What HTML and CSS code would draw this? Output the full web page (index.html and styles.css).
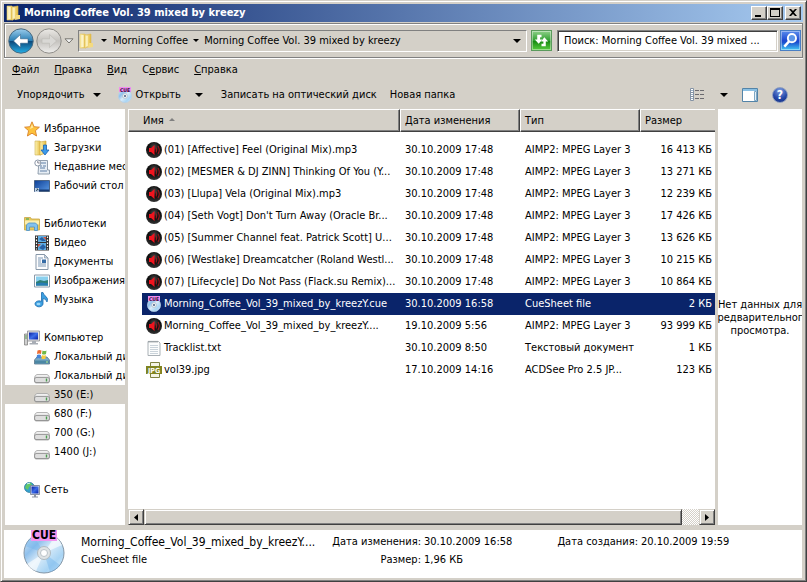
FILE: index.html
```html
<!DOCTYPE html>
<html lang="ru">
<head>
<meta charset="utf-8">
<title>Morning Coffee Vol. 39 mixed by kreezy</title>
<link rel="stylesheet" href="styles.css">
</head>
<body>
<svg class="sprite" aria-hidden="true">
  <defs>
    <linearGradient id="gFolder" x1="0" x2="1"><stop offset="0" stop-color="#fdf3b4"/><stop offset="1" stop-color="#e3b93c"/></linearGradient>
    <linearGradient id="gBlue" x1="0" x2="0" y1="0" y2="1"><stop offset="0" stop-color="#9ccdec"/><stop offset=".48" stop-color="#2b7fb4"/><stop offset=".5" stop-color="#0b4678"/><stop offset="1" stop-color="#25b0e8"/></linearGradient>
    <linearGradient id="gGrey" x1="0" x2="0" y1="0" y2="1"><stop offset="0" stop-color="#eceae6"/><stop offset=".5" stop-color="#c4c2be"/><stop offset="1" stop-color="#efeeec"/></linearGradient>
    <linearGradient id="gScreen" x1="0" x2="1" y1="0" y2="1"><stop offset="0" stop-color="#0a1fa0"/><stop offset=".5" stop-color="#3c6de8"/><stop offset="1" stop-color="#0820a8"/></linearGradient>
    <linearGradient id="gDesk" x1="0" x2="1" y1="0" y2="1"><stop offset="0" stop-color="#0d3f96"/><stop offset="1" stop-color="#5b9ae4"/></linearGradient>
    <linearGradient id="gDrive" x1="0" x2="0" y1="0" y2="1"><stop offset="0" stop-color="#fafafa"/><stop offset="1" stop-color="#a8a8a8"/></linearGradient>
    <linearGradient id="gDisc" x1="0" x2="1" y1="0" y2="1"><stop offset="0" stop-color="#e4f1fb"/><stop offset=".3" stop-color="#8fc0ec"/><stop offset=".5" stop-color="#d9ebf9"/><stop offset=".75" stop-color="#a8d4f4"/><stop offset="1" stop-color="#e9f5fd"/></linearGradient>
    <radialGradient id="gAudio" cx=".5" cy=".3" r=".7"><stop offset="0" stop-color="#4a4a4a"/><stop offset=".5" stop-color="#0c0c0c"/><stop offset="1" stop-color="#333"/></radialGradient>
  </defs>
  <symbol id="folder" viewBox="0 0 16 16"><path d="M1 1h5l1 2v12H1z" fill="url(#gFolder)" stroke="#e3c668" stroke-width=".6"/><path d="M6 2l6-1v12l-6 2z" fill="url(#gFolder)" stroke="#dcb954" stroke-width=".6"/><path d="M10 10h4v4l-5 1z" fill="#f4da80"/><path d="M3 2v12M4 2v12M8 3v10" stroke="#fffbe0"/></symbol>
  <symbol id="star" viewBox="0 0 16 16"><path d="M8 .8l2.1 4.9 5.3.5-4 3.5 1.2 5.3L8 12.2l-4.600 2.800 1.200-5.300-4-3.500 5.300-.5z" fill="#fdc23c" stroke="#d9822a" stroke-width=".9"/><path d="M8 3l1.300 3.500L6 8z" fill="#ffe9a0"/></symbol>
  <symbol id="downloads" viewBox="0 0 16 16"><path d="M1 1h5l1 2v12H1z" fill="url(#gFolder)" stroke="#cfae4d" stroke-width=".6"/><path d="M6 2l6-1v12l-6 2z" fill="url(#gFolder)" stroke="#cfa63a" stroke-width=".6"/><path d="M9.500 5h3v5H15l-4 5-4-5h2.500z" fill="#3d9bea" stroke="#1b62b4" stroke-width=".8"/></symbol>
  <symbol id="recent" viewBox="0 0 16 16"><path d="M5 1.500h8.500V11h2v4H4z" fill="#e7eef5" stroke="#8795a5" stroke-width=".9"/><path d="M7 4h5M6 7h2m1 0h3M6 9h5M6 12h7" stroke="#5f7fa5"/><circle cx="3.800" cy="4" r="3" fill="#fff" stroke="#8c98a8"/><path d="M3.800 2v2h2" fill="none" stroke="#667" stroke-width=".8"/></symbol>
  <symbol id="desktop" viewBox="0 0 16 16"><path d="M.5 2.500h15v11H.5z" fill="url(#gDesk)" stroke="#4c6484"/><path d="M1 11.500h14v1.500H1z" fill="#173a72"/><path d="M1 10h4v4H1z" fill="#c4d4ea"/><path d="M2 13l2-2m-1.500 0H4v1.500" stroke="#245" stroke-width=".8" fill="none"/></symbol>
  <symbol id="libraries" viewBox="0 0 16 16"><path d="M.5 1.500h6l1 1.500h8v11H.5z" fill="#e8c95c" stroke="#c8a543" stroke-width=".8"/><path d="M1 4.500h14v4H1z" fill="#fbeeb0"/><path d="M2 3h3" stroke="#4cab5a" stroke-width="1.200"/><path d="M2.500 14.500V9l2-2h7l2 2v5.500h-3V11h-5v3.500z" fill="#83c1ec" stroke="#4b92c6" stroke-width=".8"/></symbol>
  <symbol id="video" viewBox="0 0 16 16"><path d="M1 .5h14v15H1z" fill="#333"/><path d="M4 1h8v6H4zM4 8h8v7H4z" fill="#5faee4"/><path d="M5 4l3-2 4 4H8zM5 13l4-4 3 3-3 3z" fill="#2760a4"/><path d="M9 2h3v3zM4 9h3l-3 3z" fill="#cf5540"/><path d="M2.500 1.500v13M13.500 1.500v13" stroke="#fff" stroke-width="1.200" stroke-dasharray="1.500 1.500"/></symbol>
  <symbol id="docs" viewBox="0 0 16 16"><path d="M2 .5h8.500L14 4v11.500H2z" fill="#fdfdfe" stroke="#8797a8"/><path d="M10.500.5V4H14z" fill="#cbd8e4" stroke="#8797a8" stroke-width=".7"/><path d="M4 4h5M4 6h3M4 8h3M4 10h8M4 12h8" stroke="#7d98b4"/><path d="M8 5.500h4V9H8z" fill="#376ca6"/></symbol>
  <symbol id="images" viewBox="0 0 16 16"><path d="M.5 2h15v12H.5z" fill="#fff" stroke="#8a9aaa"/><path d="M2 3.500h12v9H2z" fill="#8ad0ee"/><path d="M2 9l4-2 4 1 4-1v5.500H2z" fill="#2f7f76"/><path d="M2 10.500l6-1 6 1v2H2z" fill="#267cb4"/></symbol>
  <symbol id="music" viewBox="0 0 16 16"><path d="M7.500.5h1.500q.5 2.500 3 4 2.500 2 1 5.500-1-3.500-4-3.500v5.500a4 3 0 1 1-1.500-2.500z" fill="#3c9fe0" stroke="#1e6dae" stroke-width=".8"/><ellipse cx="4.500" cy="12" rx="2" ry="1.300" fill="#9bd7f8"/></symbol>
  <symbol id="computer" viewBox="0 0 16 16"><path d="M.5 4h3v11h-3z" fill="#d0d0d0" stroke="#777" stroke-width=".7"/><path d="M1 6h2M1 8h2" stroke="#56a04e"/><path d="M3.500 1h12v10h-12z" fill="#e4e4e4" stroke="#8c8c90" stroke-width=".8"/><path d="M5 2.500h9v7H5z" fill="url(#gScreen)"/><path d="M8 11h4v2H8zM5.500 13h8.500v1.500H5.500z" fill="#a8adb5"/></symbol>
  <symbol id="drivewin" viewBox="0 0 16 16"><path d="M3 8h10l2.500 3v4H.5v-4z" fill="#7aaac4" stroke="#587488" stroke-width=".8"/><path d="M1 11.500h14v3H1z" fill="#4c87a4"/><path d="M12 12.500h2v1h-2z" fill="#b9f38a"/><path d="M3.500 1.500q2-1 4 0L7 5q-2-1-4 0z" fill="#ee6b30"/><path d="M8.500 1.500q2 1 4 0L12 5q-2 1-4 0z" fill="#72b845"/><path d="M3 6q2-1 4 0l-.5 3.500q-2-1-4 0z" fill="#4585d8"/><path d="M8 6q2 1 4 0l-.5 3.500q-2 1-4 0z" fill="#f8cb3c"/></symbol>
  <symbol id="drive" viewBox="0 0 16 16"><path d="M3 6.500h10q2 .5 2.500 3v4l-1 1.500h-13l-1-1.500v-4q.5-2.500 2.500-3z" fill="url(#gDrive)" stroke="#a2a2a2" stroke-width=".8"/><path d="M2 9.500h12q1.500 0 1.500 2.500t-1.500 2.500H2Q.5 14.500.5 12T2 9.500z" fill="#dedede" stroke="#828282" stroke-width=".7"/><path d="M12.500 10.500v3" stroke="#4c9c50" stroke-width="1.400"/></symbol>
  <symbol id="network" viewBox="0 0 16 16"><circle cx="5.500" cy="5.500" r="5" fill="#34a1ce" stroke="#1c6e94" stroke-width=".7"/><path d="M2 3q2-3 5-2l1 2-3 2-1 3-3-2z" fill="#62c767"/><path d="M3 1.800l3-.6" stroke="#c9f3f1"/><path d="M6.500 3.500h9v9h-9z" fill="#d9dde5" stroke="#747c90" stroke-width=".8"/><path d="M7.500 4.500h7v7h-7z" fill="url(#gScreen)"/><path d="M10 12.500h2v2h2v1H8v-1h2z" fill="#8d94a4"/></symbol>
  <symbol id="audio" viewBox="0 0 16 16"><circle cx="8" cy="8" r="8" fill="url(#gAudio)"/><path d="M3 6h2l3.500-3v10L5 10H3z" fill="#f0141e"/><path d="M10 5.500q1.500 2.500 0 5M12 4q2.500 4 0 8" fill="none" stroke="#a0161c" stroke-width="1.100"/></symbol>
  <symbol id="cue" viewBox="0 0 16 16"><circle cx="8" cy="9" r="6.600" fill="url(#gDisc)" stroke="#b6cfe4" stroke-width=".7"/><circle cx="8" cy="9" r="2.400" fill="#f5f7f8" stroke="#a8b8c4" stroke-width=".7"/><circle cx="8" cy="9" r="1" fill="#445c84"/><path d="M2 0h12v5H2z" fill="#f08cf0"/><text class="tiny" x="8" y="4.500" text-anchor="middle">CUE</text></symbol>
  <symbol id="text" viewBox="0 0 16 16"><path d="M2 1.500h10.500L14 3v12.500H2z" fill="#fcfdfd" stroke="#a0a8ae" stroke-width=".9"/><path d="M4 5.500h8M4 7.500h8M4 9.500h8M4 11.500h8M4 13.500h8" stroke="#bcc8d0" stroke-width=".8"/><path d="M3 .8v2M5 .8v2M7 .8v2M9 .8v2M11 .8v2" stroke="#8a9296" stroke-width=".8"/></symbol>
  <symbol id="jpg" viewBox="0 0 16 16"><path d="M4.500.5h9v15h-9z" fill="#f4f4e6" stroke="#7e8240"/><path d="M0 4h16v8H0z" fill="#7f8420"/><text class="ext" x="8" y="10.500" text-anchor="middle">JPG</text></symbol>
  <symbol id="bigcue" viewBox="0 0 42 44"><circle cx="21" cy="23" r="20" fill="url(#gDisc)" stroke="#8496a6"/><path d="M21 23L2 16q3-7 9-10zM21 23l16 12q-4 6-10 7z" fill="#6eb2ec" opacity=".4"/><path d="M21 23L4 34q4 6 9 7zM21 23L32 6q5 4 7 9z" fill="#fff" opacity=".6"/><circle cx="21" cy="23" r="6.500" fill="#dfe3e5" stroke="#b0bac0"/><circle cx="21" cy="23" r="3.500" fill="#fff" stroke="#b9c2c8"/></symbol>
</svg>

<div class="window">
  <header class="titlebar">
    <svg class="icon"><use href="#folder"/></svg>
    <h1>Morning Coffee Vol. 39 mixed by kreezy</h1>
    <div class="captions">
      <button class="cap" aria-label="Свернуть"><svg viewBox="0 0 12 10"><path d="M2 7h6v2H2z"/></svg></button>
      <button class="cap" aria-label="Развернуть"><svg viewBox="0 0 12 10"><path d="M1 0h10v9H1zM2 2v6h8V2z" fill-rule="evenodd"/></svg></button>
      <button class="cap close" aria-label="Закрыть"><svg viewBox="0 0 12 10"><path d="M2 1h2l2 2 2-2h2L7 4.500 10 8H8L6 6 4 8H2l3-3.500z"/></svg></button>
    </div>
  </header>

  <div class="navbar">
    <div class="travel">
      <button aria-label="Назад"><svg viewBox="0 0 26 26"><circle cx="13" cy="13" r="12.200" fill="url(#gBlue)" stroke="#49697f"/><path d="M5.500 13l7-6.500v4.300H20v4.400h-7.500v4.300z" fill="#fff" stroke="#1d4f78" stroke-width=".5"/></svg></button>
      <button aria-label="Вперёд"><svg viewBox="0 0 26 26"><circle cx="13" cy="13" r="12.200" fill="url(#gGrey)" stroke="#8e8c88"/><path d="M20.500 13l-7-6.500v4.300H6v4.400h7.500v4.300z" fill="#d9d8d5" stroke="#bbb8b3" stroke-width=".6"/></svg></button>
      <button class="recent-btn" aria-label="Последние страницы"><svg viewBox="0 0 10 6"><path d="M1 .8h8L5 5z" fill="#f2f2f2" stroke="#77756f"/></svg></button>
    </div>
    <nav class="address" aria-label="Адрес">
      <svg class="icon"><use href="#folder"/></svg>
      <button class="crumb-arrow" aria-label="Показать папки"><i class="small-arrow"></i></button>
      <a href="#">Morning Coffee</a>
      <button class="crumb-arrow" aria-label="Показать папки"><i class="small-arrow"></i></button>
      <a href="#">Morning Coffee Vol. 39 mixed by kreezy</a>
      <button class="history" aria-label="Предыдущие расположения"><i class="arrow"></i></button>
    </nav>
    <button class="square green" aria-label="Обновить"><svg viewBox="0 0 20 20"><path d="M10 4H5.500v5H3l4 4.500L11 9H8.500V6.500H10z" fill="#fff"/><path d="M10 16h4.500v-5H17l-4-4.500L9.500 11H12v2.500h-2z" fill="#fff"/></svg></button>
    <input class="search" type="text" aria-label="Поиск" placeholder="Поиск: Morning Coffee Vol. 39 mixed ...">
    <button class="square blue" aria-label="Найти"><svg viewBox="0 0 20 20"><circle cx="11.500" cy="7.500" r="4.300" fill="#5d96e8" stroke="#fff" stroke-width="2"/><path d="M8.500 11l-5 5.500" stroke="#fff" stroke-width="2.600"/></svg></button>
  </div>

  <nav class="menubar" aria-label="Меню">
    <button><u>Ф</u>айл</button><button><u>П</u>равка</button><button><u>В</u>ид</button><button>С<u>е</u>рвис</button><button><u>С</u>правка</button>
  </nav>

  <div class="toolbar">
    <button class="organize">Упорядочить <i class="arrow"></i></button>
    <button class="open"><svg class="icon"><use href="#cue"/></svg>Открыть</button>
    <button class="open-more" aria-label="Открыть с помощью"><i class="arrow"></i></button>
    <button class="burn">Записать на оптический диск</button>
    <button>Новая папка</button>
    <div class="tools">
      <button aria-label="Вид"><svg class="icon" viewBox="0 0 16 16"><path d="M.5 1.500h3v12h-3zM.5 5.500h3M.5 9.500h3" fill="#fff" stroke="#8593a4"/><path d="M1.500 3.500h1M1.500 7.500h1M1.500 11.500h1" stroke="#35608c"/><path d="M5 3.500h4m1 0h4M5 7.500h4m1 0h4M5 11.500h4m1 0h4" stroke="#6b6b70"/></svg></button>
      <button aria-label="Изменить вид"><i class="arrow"></i></button>
      <button aria-label="Область просмотра"><svg class="icon" viewBox="0 0 16 16"><path d="M.5 1.500h15v13H.5z" fill="#fff" stroke="#5384a8"/><path d="M1 2h14v2H1z" fill="#8ac0e4"/><path d="M12.500 4.500h2v9h-2z" fill="#e5eff7" stroke="#7fa8c4"/></svg></button>
      <button class="help" aria-label="Справка">?</button>
    </div>
  </div>

  <main class="body">
    <nav class="tree" aria-label="Область переходов">
      <ul>
        <li class="root"><a href="#"><svg class="icon"><use href="#star"/></svg>Избранное</a></li>
        <li><a href="#"><svg class="icon"><use href="#downloads"/></svg>Загрузки</a></li>
        <li><a href="#"><svg class="icon"><use href="#recent"/></svg>Недавние места</a></li>
        <li><a href="#"><svg class="icon"><use href="#desktop"/></svg>Рабочий стол</a></li>
      </ul>
      <ul>
        <li class="root"><a href="#"><svg class="icon"><use href="#libraries"/></svg>Библиотеки</a></li>
        <li><a href="#"><svg class="icon"><use href="#video"/></svg>Видео</a></li>
        <li><a href="#"><svg class="icon"><use href="#docs"/></svg>Документы</a></li>
        <li><a href="#"><svg class="icon"><use href="#images"/></svg>Изображения</a></li>
        <li><a href="#"><svg class="icon"><use href="#music"/></svg>Музыка</a></li>
      </ul>
      <ul>
        <li class="root"><a href="#"><svg class="icon"><use href="#computer"/></svg>Компьютер</a></li>
        <li><a href="#"><svg class="icon"><use href="#drivewin"/></svg>Локальный диск</a></li>
        <li><a href="#"><svg class="icon"><use href="#drive"/></svg>Локальный диск</a></li>
        <li class="active"><a href="#"><svg class="icon"><use href="#drive"/></svg>350 (E:)</a></li>
        <li><a href="#"><svg class="icon"><use href="#drive"/></svg>680 (F:)</a></li>
        <li><a href="#"><svg class="icon"><use href="#drive"/></svg>700 (G:)</a></li>
        <li><a href="#"><svg class="icon"><use href="#drive"/></svg>1400 (J:)</a></li>
      </ul>
      <ul>
        <li class="root"><a href="#"><svg class="icon"><use href="#network"/></svg>Сеть</a></li>
      </ul>
    </nav>

    <section class="files">
      <table>
        <colgroup><col><col class="c-date"><col class="c-type"><col class="c-size"></colgroup>
        <thead><tr><th>Имя <i class="sort"></i></th><th>Дата изменения</th><th>Тип</th><th>Размер</th></tr></thead>
        <tbody>
          <tr><td><svg class="icon"><use href="#audio"/></svg>(01) [Affective] Feel (Original Mix).mp3</td><td>30.10.2009 17:48</td><td>AIMP2: MPEG Layer 3</td><td>16 413 КБ</td></tr>
          <tr><td><svg class="icon"><use href="#audio"/></svg>(02) [MESMER &amp; DJ ZINN] Thinking Of You (Y...</td><td>30.10.2009 17:48</td><td>AIMP2: MPEG Layer 3</td><td>13 271 КБ</td></tr>
          <tr><td><svg class="icon"><use href="#audio"/></svg>(03) [Llupa] Vela (Original Mix).mp3</td><td>30.10.2009 17:48</td><td>AIMP2: MPEG Layer 3</td><td>12 239 КБ</td></tr>
          <tr><td><svg class="icon"><use href="#audio"/></svg>(04) [Seth Vogt] Don't Turn Away (Oracle Br...</td><td>30.10.2009 17:48</td><td>AIMP2: MPEG Layer 3</td><td>17 426 КБ</td></tr>
          <tr><td><svg class="icon"><use href="#audio"/></svg>(05) [Summer Channel feat. Patrick Scott] U...</td><td>30.10.2009 17:48</td><td>AIMP2: MPEG Layer 3</td><td>13 626 КБ</td></tr>
          <tr><td><svg class="icon"><use href="#audio"/></svg>(06) [Westlake] Dreamcatcher (Roland Westl...</td><td>30.10.2009 17:48</td><td>AIMP2: MPEG Layer 3</td><td>10 215 КБ</td></tr>
          <tr><td><svg class="icon"><use href="#audio"/></svg>(07) [Lifecycle] Do Not Pass (Flack.su Remix)...</td><td>30.10.2009 17:48</td><td>AIMP2: MPEG Layer 3</td><td>10 864 КБ</td></tr>
          <tr class="selected"><td><svg class="icon"><use href="#cue"/></svg>Morning_Coffee_Vol_39_mixed_by_kreezY.cue</td><td>30.10.2009 16:58</td><td>CueSheet file</td><td>2 КБ</td></tr>
          <tr><td><svg class="icon"><use href="#audio"/></svg>Morning_Coffee_Vol_39_mixed_by_kreezY....</td><td>19.10.2009 5:56</td><td>AIMP2: MPEG Layer 3</td><td>93 999 КБ</td></tr>
          <tr><td><svg class="icon"><use href="#text"/></svg>Tracklist.txt</td><td>30.10.2009 8:50</td><td>Текстовый документ</td><td>1 КБ</td></tr>
          <tr><td><svg class="icon"><use href="#jpg"/></svg>vol39.jpg</td><td>17.10.2009 14:16</td><td>ACDSee Pro 2.5 JP...</td><td>123 КБ</td></tr>
        </tbody>
      </table>
      <div class="scrollbar">
        <button aria-label="Прокрутить влево"><svg viewBox="0 0 4 7"><path d="M4 0v7L0 3.500z"/></svg></button>
        <div class="track"><div class="thumb"></div></div>
        <button aria-label="Прокрутить вправо"><svg viewBox="0 0 4 7"><path d="M0 0v7l4-3.500z"/></svg></button>
      </div>
    </section>

    <aside class="preview"><p>Нет данных для<br>предварительного<br>просмотра.</p></aside>
  </main>

  <footer class="details">
    <div class="disc"><svg viewBox="0 0 42 44"><use href="#bigcue"/></svg><span>CUE</span></div>
    <div class="summary">
      <strong>Morning_Coffee_Vol_39_mixed_by_kreezY....</strong>
      <span class="label">Дата изменения:</span><span>30.10.2009 16:58</span>
      <span class="label">Дата создания:</span><span>20.10.2009 19:59</span>
      <span class="kind">CueSheet file</span>
      <span class="label">Размер:</span><span>1,96 КБ</span>
    </div>
  </footer>
</div>
</body>
</html>
```
FILE: styles.css
```css
:root {
  --face: #d4d0c8;
  --shadow: #808080;
  --dark: #404040;
  --select: #0a246a;
}
* { box-sizing: border-box; }
body {
  margin: 0;
  color: #000;
  font: 11px/14px "DejaVu Sans Condensed", "Noto Sans", sans-serif;
}
button {
  display: flex;
  align-items: center;
  justify-content: center;
  margin: 0;
  padding: 0;
  border: 0;
  background: none;
  color: inherit;
  font: inherit;
  white-space: nowrap;
}
a { color: inherit; text-decoration: none; }
.sprite { position: absolute; width: 0; height: 0; }
.icon { display: block; flex: none; width: 16px; height: 16px; }
.tiny { font-size: 5px; font-weight: bold; fill: #321036; }
.ext { font-size: 7px; font-weight: bold; fill: #fff; }
.arrow {
  flex: none;
  border: 4px solid transparent;
  border-top-color: #000;
  border-bottom: 0;
}
.small-arrow {
  border: 3px solid transparent;
  border-top-color: #000;
  border-bottom: 0;
}

.window {
  display: flex;
  flex-direction: column;
  min-height: 100vh;
  padding: 2px;
  background: var(--face);
  border: 1px solid;
  border-color: var(--face) var(--dark) var(--dark) var(--face);
  box-shadow: inset 1px 1px #fff, inset -1px -1px var(--shadow);
}

.titlebar {
  display: flex;
  align-items: center;
  height: 18px;
  margin: 1px 1px 0;
  padding: 0 2px;
  background: linear-gradient(90deg, #0a246a, #a6caf0);
  color: #fff;
}
.titlebar h1 {
  flex: 1;
  margin: 0 0 0 2px;
  font-size: 11px;
  line-height: 18px;
  font-weight: bold;
}
.captions { display: flex; }
.cap {
  width: 16px;
  height: 14px;
  background: var(--face);
  border: 1px solid;
  border-color: #fff var(--dark) var(--dark) #fff;
  box-shadow: inset -1px -1px var(--shadow);
}
.cap svg { width: 12px; height: 10px; }
.close { margin-left: 2px; }

.navbar {
  display: flex;
  align-items: center;
  height: 35px;
  margin: 1px 1px 0;
  padding: 0 1px 0 3px;
  border: 1px solid var(--shadow);
  box-shadow: inset 1px 1px #fff, 0 1px #fff;
}
.travel { display: flex; align-items: center; width: 70px; }
.travel svg { width: 26px; height: 26px; margin-right: 2px; }
.recent-btn svg { width: 10px; height: 6px; margin: 0; }
.address {
  display: flex;
  flex: 1;
  align-items: center;
  height: 22px;
  padding: 0 5px 0 0;
  border: 1px solid;
  border-color: var(--shadow) #fff #fff var(--shadow);
}
.crumb-arrow { width: 16px; height: 16px; }
.address .icon + .crumb-arrow { width: 18px; }
.history { margin-left: auto; }
.square {
  width: 21px;
  height: 21px;
  border: 1px solid;
  box-shadow: inset 0 0 0 1px rgba(255, 255, 255, .4);
}
.square svg { width: 19px; height: 19px; }
.green {
  margin: 0 5px 0 4px;
  border-color: #5a9a5c;
  background: linear-gradient(#8fd08a, #2fa030 50%, #12860f 51%, #57cc3e);
}
.blue {
  border-color: #4a7fc4;
  background: linear-gradient(#5a8cec, #1c49d0 50%, #1a50d0 60%, #41c8f4);
}
.search {
  width: 221px;
  height: 22px;
  margin-right: 2px;
  padding: 0 6px;
  border: 1px solid;
  border-color: var(--shadow) #fff #fff var(--shadow);
  box-shadow: inset 1px 1px var(--dark), inset -1px -1px var(--face);
  background: #fff;
  font: inherit;
}
.search::placeholder { color: #000; opacity: 1; }

.menubar {
  display: flex;
  gap: 15px;
  height: 23px;
  padding: 0 9px;
}
.toolbar {
  display: flex;
  align-items: center;
  height: 28px;
  padding: 0 16px 0 14px;
}
.organize { gap: 8px; margin-right: 16px; }
.open { gap: 3px; }
.open-more { margin: 0 18px 0 14px; }
.burn { margin-right: 13px; }
.tools { display: flex; align-items: center; gap: 14px; margin-left: auto; }
.help {
  width: 16px;
  height: 16px;
  border: 1px solid #8d9dbd;
  border-radius: 50%;
  background: radial-gradient(circle at 50% 20%, #7d9ee2, #2345a8 60%, #17317e);
  color: #fff;
  font-size: 12px;
  font-weight: bold;
}

.body {
  display: flex;
  flex: 1;
  gap: 3px;
  padding: 0 2px;
}
.tree {
  width: 120px;
  padding-top: 10px;
  overflow: hidden;
  background: #fff;
}
.tree ul { margin: 0 0 19px; padding: 0; list-style: none; }
.tree ul:last-child { margin-bottom: 0; }
.tree a {
  display: flex;
  align-items: center;
  gap: 4px;
  height: 19px;
  padding-left: 29px;
  white-space: nowrap;
}
.tree .root a { padding-left: 19px; }
.tree .active { background: var(--face); }

.files {
  display: flex;
  flex: 1;
  flex-direction: column;
  min-width: 0;
  background: #fff;
}
table {
  width: 100%;
  table-layout: fixed;
  border-collapse: separate;
  border-spacing: 0;
}
.c-date, .c-type { width: 120px; }
.c-size { width: 75px; }
th {
  height: 23px;
  padding: 0 4px;
  background: var(--face);
  border: 1px solid;
  border-color: #fff var(--dark) var(--dark) #fff;
  box-shadow: inset -1px -1px var(--shadow);
  font-weight: normal;
  text-align: left;
}
th:first-child { padding-left: 14px; }
th:last-child { border-right: 0; box-shadow: inset 0 -1px var(--shadow); }
thead::after { content: ""; display: table-row; height: 7px; }
.sort {
  display: inline-block;
  margin: 0 0 3px 2px;
  border: 3px solid transparent;
  border-top: 0;
  border-bottom-color: var(--shadow);
}
td {
  height: 22px;
  padding: 0 0 0 5px;
  overflow: hidden;
  white-space: nowrap;
}
td:first-child { padding-left: 4px; border-left: 14px solid #fff; }
td:last-child { padding: 0 3px 0 0; text-align: right; }
td .icon { display: inline-block; margin-right: 2px; vertical-align: middle; }
.selected td { background: var(--select); color: #fff; }

.scrollbar { display: flex; height: 16px; margin-top: auto; }
.scrollbar button, .thumb {
  background: var(--face);
  border: 1px solid;
  border-color: var(--face) var(--dark) var(--dark) var(--face);
  box-shadow: inset 1px 1px #fff, inset -1px -1px var(--shadow);
}
.scrollbar button { width: 16px; }
.scrollbar svg { width: 4px; height: 7px; }
.track {
  flex: 1;
  background: repeating-conic-gradient(#fff 0 25%, var(--face) 0 50%) 0 0 / 2px 2px;
}
.thumb { width: 97%; height: 16px; }

.preview {
  display: flex;
  align-items: center;
  justify-content: center;
  width: 84px;
  overflow: hidden;
  background: #fff;
  line-height: 13px;
  text-align: center;
}
.preview p { flex: none; margin: 0; }

.details {
  display: flex;
  height: 48px;
  margin: 5px 2px 1px 1px;
  padding-left: 19px;
  background: #fff;
}
.disc { position: relative; width: 42px; height: 44px; }
.disc svg { display: block; width: 42px; height: 44px; }
.disc span {
  position: absolute;
  top: 0;
  left: 8px;
  padding: 0 1px;
  background: #f294ee;
  font-size: 12px;
  font-weight: bold;
  line-height: 11px;
}
.summary {
  display: grid;
  grid-template-columns: 248px 89px 129px 82px auto;
  grid-auto-rows: 18px;
  column-gap: 3px;
  align-items: center;
  padding: 3px 0 0 16px;
  white-space: nowrap;
}
.summary strong { font-size: 12px; font-weight: normal; }
.summary .label { text-align: right; }
.summary .kind { grid-column: 1; }
```
